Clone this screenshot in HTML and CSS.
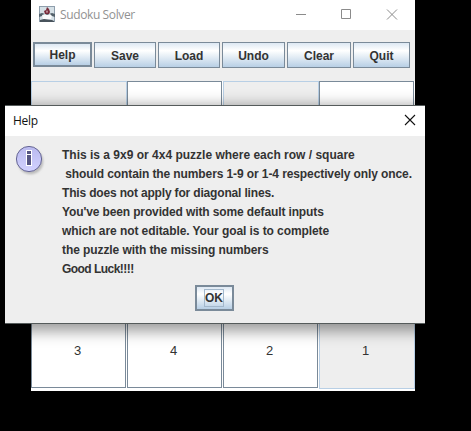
FILE: index.html
```html
<!DOCTYPE html>
<html lang="en">
<head>
<meta charset="utf-8">
<title>Sudoku Solver</title>
<link rel="stylesheet" href="styles.css">
</head>
<body>
<main class="window">
  <header class="titlebar">
    <svg class="app-icon" width="16" height="16" viewBox="0 0 16 16">
      <rect width="16" height="16" fill="#8e9eac"/>
      <rect x="1" y="1" width="14" height="14" fill="#d5e0e6"/>
      <path d="M0 8l3-1 3 1h4l3-1 3 1v3l-3-1H3l-3 1z" fill="#53616b"/>
      <path d="M8 1l2 2 1 3-1 2H6L5 5l2-1z" fill="#792c3b"/>
      <path d="M8 4l1 2-1 1-1-1z" fill="#cda4ad"/>
      <path d="M3 9l3-1 2 1 3-1 2 2-1 3-4 1-4-1z" fill="#fafcfd"/>
      <path d="M1 14l4-1 8 1 2 1v1H1z" fill="#48535c"/>
    </svg>
    <span class="app-name">Sudoku Solver</span>
    <svg class="controls" width="104" height="12" viewBox="0 0 104 12">
      <g fill="none" stroke="#8b8b8b">
        <path d="M0 6.5h10M45.5 1.5h9v9h-9zM91 1.5l10 10M101 1.5l-10 10"/>
      </g>
    </svg>
  </header>
  <nav class="toolbar">
    <button class="btn focused help">Help</button>
    <button class="btn save">Save</button>
    <button class="btn load">Load</button>
    <button class="btn undo">Undo</button>
    <button class="btn clear">Clear</button>
    <button class="btn quit">Quit</button>
  </nav>
  <section class="board">
    <div class="cell fixed"></div><div class="cell"></div><div class="cell fixed"></div><div class="cell"></div>
    <div class="cell"></div><div class="cell"></div><div class="cell"></div><div class="cell"></div>
    <div class="cell"></div><div class="cell"></div><div class="cell"></div><div class="cell"></div>
    <div class="cell">3</div><div class="cell">4</div><div class="cell">2</div><div class="cell fixed">1</div>
  </section>
</main>
<section class="dialog">
  <header class="dialog-title">
    <span>Help</span>
    <svg width="12" height="12" viewBox="0 0 12 12"><path d="M1 1l10 10M11 1L1 11" stroke="#111" stroke-width="1.1"/></svg>
  </header>
  <div class="dialog-body">
    <svg class="info" width="32" height="32" viewBox="0 0 32 32">
      <defs>
        <linearGradient id="disc" x2="0" y2="1"><stop stop-color="#b9b9ee"/><stop offset="1" stop-color="#d2d2ff"/></linearGradient>
        <filter id="soft"><feGaussianBlur stdDeviation="1"/></filter>
      </defs>
      <circle cx="15.5" cy="15.5" r="12.8" fill="#bbb" filter="url(#soft)"/>
      <circle cx="14" cy="13" r="12.6" fill="url(#disc)" stroke="#666694"/>
      <path d="M11 4h6v5h-6zM11 8h6v12h-6z" fill="#fff"/>
      <path d="M12 5h4v3h-4zM12 9h4v10h-4z" fill="#555583"/>
    </svg>
    <div class="message">
      <p class="l1">This is a 9x9 or 4x4 puzzle where each row / square</p>
      <p class="l2"> should contain the numbers 1-9 or 1-4 respectively only once.</p>
      <p class="l3">This does not apply for diagonal lines.</p>
      <p class="l4">You've been provided with some default inputs</p>
      <p class="l5">which are not editable. Your goal is to complete</p>
      <p class="l6">the puzzle with the missing numbers</p>
      <p class="l7">Good Luck!!!!</p>
    </div>
  </div>
  <footer class="actions"><button class="btn focused ok"><span>OK</span></button></footer>
</section>
</body>
</html>
```
FILE: styles.css
```css
* { box-sizing: border-box; }
body {
  margin: 0;
  width: 471px;
  height: 431px;
  overflow: hidden;
  background: #000;
  color: #333;
  font: 12px "Liberation Sans", Arial, sans-serif;
}
.window {
  width: 384px;
  height: 391px;
  margin-left: 31px;
  background: #eee;
}
.titlebar {
  display: flex;
  align-items: center;
  height: 30px;
  padding: 0 16px 0 8px;
  background: #fff;
}
.app-icon { margin-top: -2px; }
.app-name {
  margin: -1px 0 0 5px;
  color: #929292;
  font: 12px "Open Sans", sans-serif;
  letter-spacing: -.38px;
}
.controls { margin: -2px -1px 0 auto; }
.toolbar {
  display: flex;
  gap: 2px;
  height: 51px;
  padding: 12px 0 0 2px;
}
.btn {
  height: 26px;
  padding: 0;
  border: 1px solid #7a8a99;
  border-radius: 0;
  background: linear-gradient(#dde8f3, #fff 32%, #f4f8fb 42%, #b8cfe5);
  color: #333;
  font: bold 12px "Liberation Sans", Arial, sans-serif;
}
.btn:not(.ok) { padding-top: 1px; }
.focused { border-width: 2px; }
.help { width: 59px; height: 25px; }
.save { width: 62px; }
.load { width: 62px; }
.undo { width: 63px; }
.clear { width: 64px; }
.quit { width: 57px; }
.board {
  display: grid;
  grid-template-columns: repeat(4, 96px);
  grid-template-rows: 77px 77px 78px 76px;
  height: 310px;
  background: #fff;
}
.cell {
  display: flex;
  align-items: center;
  justify-content: center;
  margin: 0 1px 1px 0;
  border: 1px solid #7a8a99;
  background: #fff;
  font-size: 13px;
  padding-right: 2px;
}
.fixed {
  margin: 0;
  padding: 0 3px 1px 0;
  border-color: #b8cfe5;
  background: #eee;
}
.dialog {
  position: absolute;
  left: 5px;
  top: 105px;
  width: 420px;
  height: 219px;
  border: solid #555b5b;
  border-width: 1px 0;
  background: #eee;
  box-shadow: 0 4px 14px 3px rgba(0, 0, 0, .4);
}
.dialog-title {
  display: flex;
  align-items: center;
  justify-content: space-between;
  height: 30px;
  padding: 0 9px 2px 8px;
  background: #fff;
  color: #111;
  font: 12px "Open Sans", sans-serif;
  letter-spacing: -.3px;
}
.dialog-body {
  display: flex;
  height: 149px;
  padding: 10px 0 0 10px;
}
.message { margin-left: 15px; font-weight: bold; }
.message p {
  width: max-content;
  height: 19px;
  margin: 0;
  line-height: 19px;
  white-space: pre;
}
.l2 { letter-spacing: -.1px; }
.l3 { letter-spacing: -.17px; }
.l4 { letter-spacing: -.125px; }
.l5 { letter-spacing: -.08px; }
.l6 { letter-spacing: -.08px; }
.l7 { letter-spacing: -.54px; }
.actions {
  display: flex;
  justify-content: center;
  padding-right: 2px;
}
.ok { width: 39px; }
.ok span {
  display: inline-block;
  height: 18px;
  border: 1px solid #a3b8cc;
  line-height: 17px;
}
```
